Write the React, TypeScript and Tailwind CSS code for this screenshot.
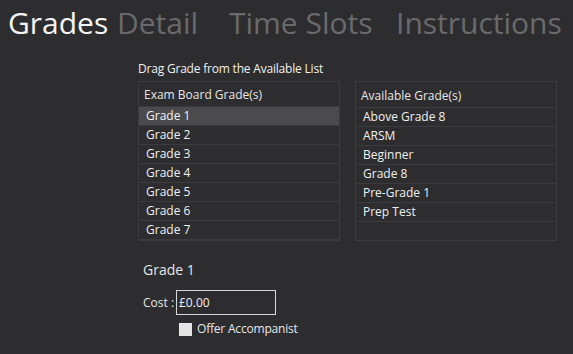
const examGrades = ["Grade 1", "Grade 2", "Grade 3", "Grade 4", "Grade 5", "Grade 6", "Grade 7"];
const availableGrades = ["Above Grade 8", "ARSM", "Beginner", "Grade 8", "Pre-Grade 1", "Prep Test"];

const tabs = [
  { label: "Grades", width: "w-[109px]" },
  { label: "Detail", width: "w-[112px]" },
  { label: "Time Slots", width: "w-[167px]" },
  { label: "Instructions", width: "" },
];

function GradeList({ title, items, selected }: { title: string; items: string[]; selected?: string }) {
  return (
    <div className="w-[202px] h-[160px] border border-[#3c3c3f] flex flex-col">
      <div className="h-[26px] flex items-center pt-[2px] px-[5px] border-b border-[#3c3c3f] text-[12px] text-[#e6e6e6]">
        {title}
      </div>
      <div className="flex flex-col">
        {items.map((item) => (
          <div
            key={item}
            className={
              "h-[19px] flex items-center px-[7px] border-b border-[#3c3c3f] text-[12px] text-[#f0f0f0] " +
              (item === selected ? "bg-[#4b4b4e]" : "")
            }
          >
            {item}
          </div>
        ))}
      </div>
    </div>
  );
}

export default function App() {
  return (
    <div
      className="w-[573px] h-[354px] bg-[#2d2d30] text-white overflow-hidden"
      style={{ fontFamily: '"Open Sans", "Noto Sans", sans-serif' }}
    >
      <nav className="flex pl-[8px] pt-[1px] h-[44px] items-center">
        {tabs.map((t, i) => (
          <span
            key={t.label}
            className={
              "text-[30px] leading-none shrink-0 " + t.width + " " + (i === 0 ? "text-[#f4f4f4]" : "text-[#6a6a6c]")
            }
          >
            {t.label}
          </span>
        ))}
      </nav>

      <div className="pl-[138px] pt-[19px]">
        <p className="text-[12px] text-[#f0f0f0] leading-none mb-[6px] tracking-[-0.2px]">
          Drag Grade from the Available List
        </p>
        <div className="flex gap-[15px]">
          <GradeList title="Exam Board Grade(s)" items={examGrades} selected="Grade 1" />
          <GradeList title="Available Grade(s)" items={availableGrades} />
        </div>

        <div className="pl-[5px] pt-[22px]">
          <p className="text-[14px] text-[#e6e6e6] leading-none">Grade 1</p>
          <div className="flex items-center mt-[13px]">
            <span className="text-[12px] text-[#e6e6e6] w-[33px]">Cost :</span>
            <div className="w-[100px] h-[25px] border border-[#d8d8d8] flex items-center px-[2px] text-[12px] text-[#f0f0f0]">
              £0.00
            </div>
          </div>
          <label className="flex items-center gap-[5px] ml-[36px] mt-[5px] text-[12px] text-[#e6e6e6] tracking-[-0.2px]">
            <span className="w-[13px] h-[13px] bg-[#e4e4e4] inline-block" />
            Offer Accompanist
          </label>
        </div>
      </div>
    </div>
  );
}
